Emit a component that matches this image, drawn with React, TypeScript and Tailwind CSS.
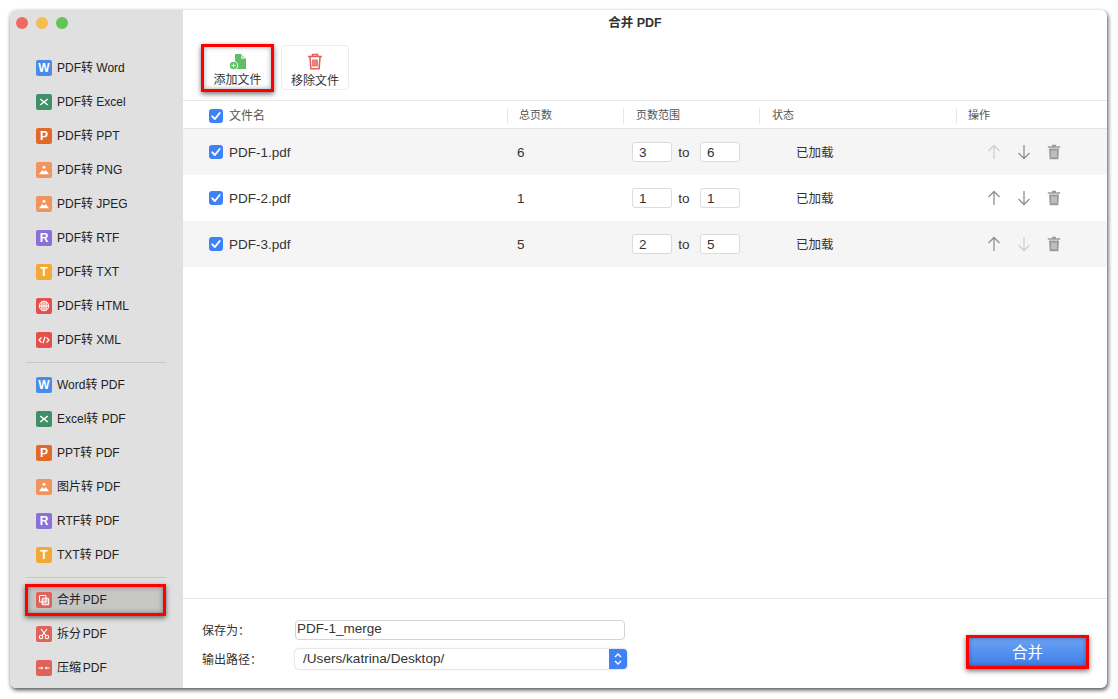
import React from "react";

const FONT = "font-['Liberation_Sans','Noto_Sans_CJK_SC',sans-serif]";

function Glyph({ kind }: { kind: string }) {
  if (kind === "img")
    return (
      <svg viewBox="0 0 16 16" className="w-4 h-4">
        <circle cx="8" cy="5.2" r="1.5" fill="#fff" />
        <path d="M3 12.2 6.2 8l1.8 1.9L9.600 8l3.400 4.200z" fill="#fff" />
      </svg>
    );
  if (kind === "x")
    return (
      <svg viewBox="0 0 16 16" className="w-4 h-4" fill="none" stroke="#fff" strokeWidth="1.500">
        <path d="M4.200 5 11.800 11M11.800 5 4.200 11" />
      </svg>
    );
  if (kind === "globe")
    return (
      <svg viewBox="0 0 16 16" className="w-4 h-4" fill="none" stroke="#fff" strokeWidth="0.9">
        <circle cx="8" cy="8" r="4.800" fill="#ffffff55" />
        <path d="M3.200 8h9.600M8 3.200v9.600M5.800 3.700v8.600M10.200 3.700v8.600" />
      </svg>
    );
  if (kind === "code")
    return (
      <svg viewBox="0 0 16 16" className="w-4 h-4" fill="none" stroke="#fff" strokeWidth="1.200">
        <path d="M5.500 5.500 3 8l2.500 2.500M10.500 5.500 13 8l-2.500 2.500M9 4.800 7 11.200" />
      </svg>
    );
  if (kind === "merge")
    return (
      <svg viewBox="0 0 16 16" className="w-4 h-4" fill="none" stroke="#fff" strokeWidth="1.100">
        <rect x="3.500" y="3.500" width="6.500" height="6.500" rx="1" />
        <rect x="6.200" y="6.200" width="6.500" height="6.500" rx="1" fill="#ffffff66" />
      </svg>
    );
  if (kind === "split")
    return (
      <svg viewBox="0 0 16 16" className="w-4 h-4" fill="none" stroke="#fff" strokeWidth="1.100">
        <circle cx="5" cy="11" r="1.700" />
        <circle cx="11" cy="11" r="1.700" />
        <path d="M6 9.600 11 3M10 9.600 5 3" />
      </svg>
    );
  if (kind === "compress")
    return (
      <svg viewBox="0 0 16 16" className="w-4 h-4" fill="none" stroke="#fff" strokeWidth="1">
        <path d="M2.500 8h3.500M13.500 8H10" />
        <path d="M7.500 8 5.300 6.500v3zM8.500 8l2.200-1.500v3z" fill="#fff" stroke="none" />
      </svg>
    );
  return <span className="text-[12px] font-bold leading-none text-white">{kind}</span>;
}

function SideItem({ label, color, kind, active, tight }: { label: string; color: string; kind: string; active?: boolean; tight?: boolean }) {
  const inner = (
    <>
      <span className={`w-4 h-4 rounded-[2px] flex items-center justify-center shrink-0 ${color}`}>
        <Glyph kind={kind} />
      </span>
      <span className={`ml-[5px] text-[12px] leading-none whitespace-nowrap text-[#222] ${tight ? "[word-spacing:-1.5px]" : ""}`}>{label}</span>
    </>
  );
  if (active)
    return (
      <div className="h-[34px] flex items-center pl-[15px]">
        <div className="w-[141px] h-[32px] pl-[8px] flex items-center border-[3px] border-[#f00] bg-[#c6c6c4] shadow-[0_2px_5px_rgba(0,0,0,0.55),inset_0_0_5px_rgba(0,0,0,0.4)]">
          {inner}
        </div>
      </div>
    );
  return <div className="h-[34px] flex items-center pl-[26px]">{inner}</div>;
}

const BLUE = "bg-[#4a8be8]";
const GREEN = "bg-[#3f8f68]";
const ORANGE = "bg-[#df6a2c]";
const PEACH = "bg-[#f0935c]";
const PURPLE = "bg-[#8a70d8]";
const YELLOW = "bg-[#f4a937]";
const RED = "bg-[#e5504c]";
const SALMON = "bg-[#e0635a]";

const group1 = [
  ["PDF转 Word", BLUE, "W"],
  ["PDF转 Excel", GREEN, "x"],
  ["PDF转 PPT", ORANGE, "P"],
  ["PDF转 PNG", PEACH, "img"],
  ["PDF转 JPEG", PEACH, "img"],
  ["PDF转 RTF", PURPLE, "R"],
  ["PDF转 TXT", YELLOW, "T"],
  ["PDF转 HTML", RED, "globe"],
  ["PDF转 XML", RED, "code"],
];
const group2 = [
  ["Word转 PDF", BLUE, "W"],
  ["Excel转 PDF", GREEN, "x"],
  ["PPT转 PDF", ORANGE, "P"],
  ["图片转 PDF", PEACH, "img"],
  ["RTF转 PDF", PURPLE, "R"],
  ["TXT转 PDF", YELLOW, "T"],
];

function Check() {
  return (
    <span className="w-[14px] h-[14px] rounded-[3px] bg-[#3f82f5] flex items-center justify-center shrink-0">
      <svg viewBox="0 0 14 14" className="w-[14px] h-[14px]" fill="none" stroke="#fff" strokeWidth="1.900" strokeLinecap="round" strokeLinejoin="round">
        <path d="M3.300 7.300 5.900 10l4.800-6" />
      </svg>
    </span>
  );
}

function Arrow({ up, dim }: { up?: boolean; dim?: boolean }) {
  return (
    <svg viewBox="0 0 14 16" className="w-[14px] h-4" fill="none" stroke={dim ? "#cfcfcf" : "#8f8f8f"} strokeWidth="1.300">
      {up ? <path d="M7 15V1.500M1.500 7 7 1.500 12.500 7" /> : <path d="M7 1v13.500M1.500 9 7 14.500 12.500 9" />}
    </svg>
  );
}

function Bin({ color = "#9a9a9a" }: { color?: string }) {
  return (
    <svg viewBox="0 0 14 16" className="w-[14px] h-4" fill={color}>
      <path d="M5 .8h4v1.400h4.200v1.500H.8V2.200H5z" />
      <path d="M2 4.600h10l-.7 10.600H2.700z" />
      <path d="M5 6.500v6.800M7 6.500v6.800M9 6.500v6.800" stroke="#fff" strokeWidth=".7" fill="none" />
    </svg>
  );
}

function Box({ v }: { v: string }) {
  return (
    <div className="w-10 h-5 rounded-[3px] bg-white border border-[#dcdce0] pl-[6px] pt-[1px] flex items-center text-[13.5px] leading-none text-[#333]">
      {v}
    </div>
  );
}

function Row({ name, total, a, b, shade, upDim, downDim }: { name: string; total: string; a: string; b: string; shade?: boolean; upDim?: boolean; downDim?: boolean }) {
  return (
    <div className={`grid grid-cols-[324px_116px_136px_197px_1fr] h-[46px] items-center text-[13.5px] text-[#333] ${shade ? "bg-[#f5f5f5]" : "bg-white"}`}>
      <div className="flex items-center pl-[26px] gap-[6px]">
        <Check />
        <span className="pt-[2px]">{name}</span>
      </div>
      <div className="pl-[10px] pt-[2px]">{total}</div>
      <div className="flex items-center pl-[9px]">
        <Box v={a} />
        <span className="w-7 text-center pt-[2px] pr-[4px]">to</span>
        <Box v={b} />
      </div>
      <div className="pl-[37px] pt-[2px] text-[12.5px]">已加载</div>
      <div className="flex items-center pl-[31px] gap-4">
        <Arrow up dim={upDim} />
        <Arrow dim={downDim} />
        <Bin />
      </div>
    </div>
  );
}

function Head({ children, cls }: { children?: React.ReactNode; cls: string }) {
  return <div className={`h-4 flex items-center text-[11px] text-[#555] ${cls}`}>{children}</div>;
}

const HEAD_SEP = "border-l border-[#e6e6e6]";

export default function App() {
  return (
    <div className={`w-[1118px] h-[699px] bg-white pt-[10px] pl-[10px] overflow-hidden ${FONT}`}>
      <div className="w-[1097px] h-[678px] flex rounded-[6px] overflow-hidden bg-white shadow-[1px_2px_4px_rgba(0,0,0,0.7)]">
        <aside className="w-[173px] shrink-0 bg-[#e0e0e0] flex flex-col">
          <div className="h-[41px] flex items-start gap-2 pl-[6px] pt-[7px] shrink-0">
            <span className="w-3 h-3 rounded-full bg-[#ee6a5f]" />
            <span className="w-3 h-3 rounded-full bg-[#f5bd4f]" />
            <span className="w-3 h-3 rounded-full bg-[#61c454]" />
          </div>
          {group1.map(([l, c, k]) => (
            <SideItem key={l} label={l} color={c} kind={k} />
          ))}
          <div className="ml-4 w-[140px] border-t border-[#c6c6c6] mt-[5px] mb-[5px] shrink-0" />
          {group2.map(([l, c, k]) => (
            <SideItem key={l} label={l} color={c} kind={k} />
          ))}
          <div className="ml-4 w-[140px] border-t border-[#c6c6c6] mt-[5px] mb-[5px] shrink-0" />
          <SideItem label="合并 PDF" color={SALMON} kind="merge" active tight />
          <SideItem label="拆分 PDF" color={SALMON} kind="split" tight />
          <SideItem label="压缩 PDF" color={SALMON} kind="compress" tight />
        </aside>

        <main className="flex-1 flex flex-col min-w-0">
          <div className="h-[26px] flex items-center justify-center pr-5 text-[12.5px] font-bold text-[#333] shrink-0">合并 PDF</div>

          <div className="h-[65px] shrink-0 border-b border-[#e8e8e8] flex items-start pl-[18px] pt-2 gap-[7px]">
            <div className="w-[73px] h-[48px] border-[3px] border-[#f00] bg-white shadow-[0_2px_5px_rgba(0,0,0,0.55),inset_0_0_5px_rgba(0,0,0,0.35)] flex flex-col items-center pt-[6px]">
              <svg viewBox="0 0 18 17" className="w-[18px] h-[17px]">
                <path d="M6 1h6l5 5v10H6z" fill="#5fbf62" />
                <path d="M12 1v5h5z" fill="#b8e5ba" />
                <circle cx="4.500" cy="12.500" r="4.200" fill="#5fbf62" stroke="#fff" strokeWidth="1" />
                <path d="M2.500 12.500h4M4.500 10.500v4" stroke="#fff" strokeWidth="1" />
              </svg>
              <span className="text-[12px] leading-none mt-[4px] text-[#333]">添加文件</span>
            </div>
            <div className="w-[68px] h-[45px] mt-[1px] border border-[#ececec] rounded-[4px] bg-white flex flex-col items-center pt-[7px]">
              <svg viewBox="0 0 16 17" className="w-4 h-[17px]" fill="none" stroke="#e2605a" strokeWidth="1.600">
                <path d="M1 3.500h14M5.500 3.200V1.500h5v1.700M3 4l.9 11.800h8.200L13 4M6 6.500v7M8 6.500v7M10 6.500v7" />
              </svg>
              <span className="text-[12px] leading-none mt-[5px] text-[#333]">移除文件</span>
            </div>
          </div>

          <div className="h-[28px] pt-[2px] shrink-0 border-b border-[#e4e4e4] grid grid-cols-[324px_116px_136px_197px_1fr] items-center">
            <Head cls="pl-[26px] gap-[6px]">
              <Check />
              <span className="text-[12px]">文件名</span>
            </Head>
            <Head cls={`${HEAD_SEP} pl-[11px]`}>总页数</Head>
            <Head cls={`${HEAD_SEP} pl-3`}>页数范围</Head>
            <Head cls={`${HEAD_SEP} pl-3`}>状态</Head>
            <Head cls={`${HEAD_SEP} pl-[11px]`}>操作</Head>
          </div>

          <Row name="PDF-1.pdf" total="6" a="3" b="6" shade upDim />
          <Row name="PDF-2.pdf" total="1" a="1" b="1" />
          <Row name="PDF-3.pdf" total="5" a="2" b="5" shade downDim />

          <div className="flex-1" />

          <div className="h-[90px] shrink-0 border-t border-[#e6e6e6] flex justify-between pl-[19px] pr-[18px]">
            <div className="flex flex-col pt-[21px] gap-[9px] text-[12px] text-[#333]">
              <div className="flex items-center h-5">
                <span className="w-[93px] pt-[2px]">保存为：</span>
                <div className="w-[330px] h-5 border border-[#d4d4d4] rounded-[4px] pl-[1px] pb-[3px] flex items-center text-[13.5px] leading-none">PDF-1_merge</div>
              </div>
              <div className="flex items-center h-5">
                <span className="w-[93px] pt-[2px]">输出路径：</span>
                <div className="w-[332px] h-5 rounded-[4px] bg-white shadow-[0_0_2px_rgba(0,0,0,0.35)] flex items-center justify-between pl-2 text-[13.6px] leading-none overflow-hidden">
                  <span>/Users/katrina/Desktop/</span>
                  <span className="w-[18px] h-5 bg-[#3f82f5] flex items-center justify-center">
                    <svg viewBox="0 0 10 14" className="w-[10px] h-[14px]" fill="none" stroke="#fff" strokeWidth="1.400">
                      <path d="M2 5 5 2l3 3M2 9l3 3 3-3" />
                    </svg>
                  </span>
                </div>
              </div>
            </div>
            <div className="w-[123px] h-[34px] mt-[36px] border-[3px] border-[#f00] bg-gradient-to-b from-[#6aa2f3] to-[#3f7fea] shadow-[0_2px_5px_rgba(0,0,0,0.55),inset_0_0_4px_rgba(0,0,0,0.35)] flex items-center justify-center text-white text-[15.5px] pt-[1px]">
              合并
            </div>
          </div>
        </main>
      </div>
    </div>
  );
}
